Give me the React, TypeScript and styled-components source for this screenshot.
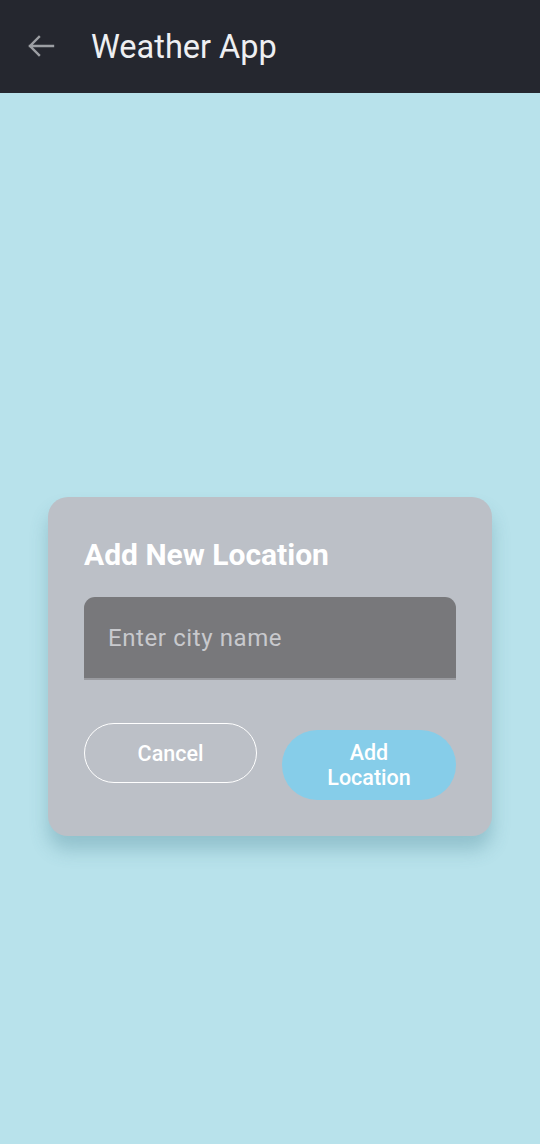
import styled, { createGlobalStyle } from "styled-components";

const GlobalStyle = createGlobalStyle`
	html, body {
		margin: 0;
		padding: 0;
		background: #b8e2eb;
		font-family: Roboto, "Liberation Sans", sans-serif;
	}
`;

const App = () => {
	return (
		<Screen>
			<GlobalStyle />
			<TopBar>
				<BackButton aria-label="Back">
					<svg width="28" height="22" viewBox="0 0 28 22" fill="none">
						<path
							d="M26 11H3 M12 2L3 11l9 9"
							stroke="#9c9ea3"
							strokeWidth="2.4"
							strokeLinecap="square"
						/>
					</svg>
				</BackButton>
				<BarTitle>Weather App</BarTitle>
			</TopBar>
			<Body>
				<Dialog>
					<DialogTitle>Add New Location</DialogTitle>
					<Field>
						<Input placeholder="Enter city name" />
					</Field>
					<Actions>
						<PillButton>Cancel</PillButton>
						<PillButton filled>
							Add
							<br />
							Location
						</PillButton>
					</Actions>
				</Dialog>
			</Body>
		</Screen>
	);
};

export default App;

const Screen = styled.div`
	width: 540px;
	min-height: 1144px;
	background: #b8e2eb;
	display: flex;
	flex-direction: column;
`;

const TopBar = styled.header`
	height: 93px;
	background: #25272f;
	display: flex;
	align-items: center;
	padding-left: 27px;
	box-sizing: border-box;
`;

const BackButton = styled.div`
	width: 28px;
	height: 22px;
	display: flex;
	margin-top: -1px;
`;

const BarTitle = styled.h1`
	margin: 0 0 0 36px;
	font-size: 32.5px;
	font-weight: 400;
	color: #eeeff2;
`;

const Body = styled.main`
	flex: 1;
	padding: 404px 48px 0;
`;

const Dialog = styled.section`
	background: #bcc0c7;
	border-radius: 20px;
	padding: 39px 36px 36px;
	height: 339px;
	box-sizing: border-box;
	box-shadow: 0 14px 18px rgba(60, 120, 135, 0.3);
`;

const DialogTitle = styled.h2`
	margin: 0;
	font-size: 30px;
	line-height: 38px;
	font-weight: 700;
	color: #ffffff;
`;

const Field = styled.div`
	margin-top: 23px;
	height: 83px;
	background: #78787b;
	border-radius: 11px 11px 0 0;
	border-bottom: 2px solid #9a9ba0;
	box-sizing: border-box;
	display: flex;
	align-items: center;
`;

const Input = styled.input`
	flex: 1;
	min-width: 0;
	background: transparent;
	border: none;
	outline: none;
	padding: 0 24px;
	margin-top: 1px;
	font-family: Roboto, "Liberation Sans", sans-serif;
	font-size: 24px;
	letter-spacing: 0.6px;
	color: #ffffff;

	&::placeholder {
		color: #c8c9cd;
	}
`;

const Actions = styled.div`
	margin-top: 43px;
	display: flex;
	justify-content: space-between;
	align-items: flex-start;
`;

const PillButton = styled.button<{ filled?: boolean }>`
	width: ${(props) => (props.filled ? "174px" : "173px")};
	height: ${(props) => (props.filled ? "70px" : "60px")};
	margin-top: ${(props) => (props.filled ? "7px" : "0")};
	border-radius: 35px;
	border: ${(props) => (props.filled ? "none" : "1.5px solid #ffffff")};
	background: ${(props) => (props.filled ? "#86cde9" : "transparent")};
	color: #ffffff;
	font-family: Roboto, "Liberation Sans", sans-serif;
	font-size: 21.5px;
	font-weight: 500;
	line-height: 25px;
	text-align: center;
	padding: 0;
`;
